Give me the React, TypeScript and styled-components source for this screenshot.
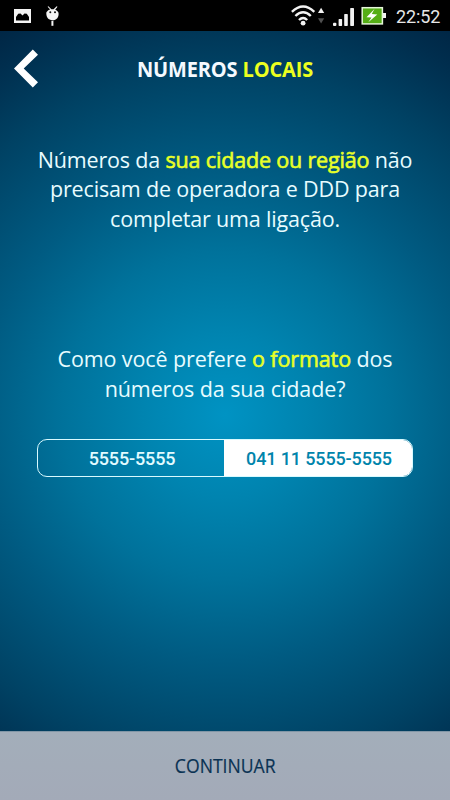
import React from 'react';
import styled, { createGlobalStyle } from 'styled-components';

const GlobalStyle = createGlobalStyle`
  * { box-sizing: border-box; }
  body { margin: 0; background: #000; }
  button { font: inherit; border: 0; padding: 0; background: none; }
`;

const Screen = styled.div`
  width: 450px;
  height: 800px;
  display: flex;
  flex-direction: column;
  overflow: hidden;
  font-family: 'Open Sans', 'Noto Sans', sans-serif;
  color: #e8fcff;
`;

const StatusBar = styled.header`
  height: 31px;
  flex: none;
  display: flex;
  justify-content: space-between;
  background: #000;
  svg { display: block; }
`;

const StatusRight = styled.div`
  display: flex;
`;

const Clock = styled.time`
  width: 60px;
  padding-left: 6px;
  font: 400 18px/33px Roboto, sans-serif;
  letter-spacing: -0.1px;
  color: #e6e6e6;
`;

const Page = styled.main`
  flex: 1;
  display: flex;
  flex-direction: column;
  background: radial-gradient(circle 455px at 225px 384px,
    #0093c3 0%, #0084b0 18%, #00729b 36%, #005b82 54%, #004264 76%, #002e4e 91%, #002442 100%);
`;

const TitleBar = styled.div`
  height: 76px;
  display: grid;
  grid-template-columns: 52px 1fr 52px;
  align-items: center;
`;

const BackButton = styled.button`
  width: 52px;
  height: 76px;
  svg { display: block; }
`;

const Title = styled.h1`
  margin: 0;
  text-align: center;
  white-space: nowrap;
  font: 700 20.5px/30px 'Open Sans', sans-serif;
  letter-spacing: -0.15px;
  transform: scaleX(0.976);
  color: #f4faff;
`;

const Accent = styled.span`
  color: #ecff1f;
`;

const Highlight = styled.span`
  color: #e8ff28;
  -webkit-text-stroke: 0.6px #e8ff28;
`;

const Paragraph = styled.p<{ $top: number; $spacing: number }>`
  margin: ${p => p.$top}px 0 0;
  text-align: center;
  white-space: nowrap;
  font-size: 21.5px;
  letter-spacing: ${p => p.$spacing}px;
  line-height: 29.4px;
`;

const Segmented = styled.div`
  display: flex;
  width: 376px;
  height: 38px;
  margin: 36px auto 0;
  border: 1.5px solid #d8faff;
  border-radius: 10px;
  overflow: hidden;
`;

const Segment = styled.button<{ $active?: boolean }>`
  width: ${p => (p.$active ? 188 : 186)}px;
  padding-left: 2px;
  flex: none;
  font: 500 18px/38px Roboto, sans-serif;
  letter-spacing: -0.14px;
  background: ${p => (p.$active ? '#fff' : 'transparent')};
  color: ${p => (p.$active ? '#0084ab' : '#e2fbff')};
`;

const ContinueButton = styled.button`
  flex: none;
  height: 69px;
  background: linear-gradient(#a3aeba, #a3aab8);
  border-top: 1px solid #8196a6;
  font: 400 20px/66px 'Open Sans', sans-serif;
  color: #0a3253;
`;

const ContinueLabel = styled.span`
  display: inline-block;
  transform: scaleX(0.88);
  -webkit-text-stroke: 0.2px #0a3253;
`;

function NotificationIcons() {
  return (
    <svg width="70" height="31" viewBox="0 0 70 31" fill="#f4f4f4">
      <path fillRule="evenodd" d="M14 9h17v14H14zM16 20.500h13v-3.500l-2.200-3.200-2.300-.2-2 1.800-2-2-2.300.3-2.200 3.300z" />
      <path d="M46.400 12.300c1.200-1.800 2.500-2.600 3.800-2.800L47.600 6.800l.8-.6 3 3h2.200l3.100-3 .8.6-2.300 2.900c1.600.7 2.700 1.700 3.300 3 .7 4.400-1.900 7.600-6 7.600s-6.800-3.600-6.100-8z" />
      <circle cx="50.300" cy="12.200" r="1" fill="#111" />
      <circle cx="55" cy="12.200" r="1" fill="#111" />
      <path d="M51.400 20.800h2v5h-2z" />
    </svg>
  );
}

function SystemIcons() {
  return (
    <svg width="100" height="31" viewBox="290 0 100 31">
      <g fill="none" stroke="#f2f2f2" strokeWidth="2.400">
        <path d="M291.900 11.800q11.200-10.600 22.400 0" />
        <path d="M295.400 16q7.700-7.400 15.400 0" />
        <path d="M299 20q4.100-4.100 8.200 0" />
      </g>
      <circle cx="303.100" cy="23.200" r="2.400" fill="#f2f2f2" />
      <path d="M318 13l3.100-5.200 3.100 5.200z" fill="#f2f2f2" />
      <path d="M318 18.200l3.100 5.300 3.100-5.300z" fill="#505050" />
      <g fill="#f2f2f2">
        <rect x="333" y="22.800" width="3.400" height="3.200" rx="1" />
        <rect x="338.600" y="19" width="3.500" height="7" rx=".7" />
        <rect x="344.200" y="14" width="3.600" height="12" rx=".7" />
        <rect x="350.200" y="8" width="3.800" height="18" rx=".7" />
        <rect x="382" y="13" width="4" height="5" />
      </g>
      <rect x="362.200" y="7.700" width="20.200" height="16.200" fill="#55ae16" stroke="#e5f6d9" strokeWidth="1.500" />
      <path d="M374.500 9l-8 8.200 5 .3-3.200 4.800 9-7.900-5.500-.3z" fill="#fff" />
    </svg>
  );
}

export default function App() {
  return (
    <Screen>
      <GlobalStyle />
      <StatusBar>
        <NotificationIcons />
        <StatusRight>
          <SystemIcons />
          <Clock>22:52</Clock>
        </StatusRight>
      </StatusBar>
      <Page>
        <TitleBar>
          <BackButton aria-label="Voltar">
            <svg width="52" height="76" viewBox="0 31 52 76">
              <path d="M32.800 49.500 38 54.700 23.700 68.400 38 82.300 32.800 87.600 14 68.400z" fill="#fff" />
            </svg>
          </BackButton>
          <Title>NÚMEROS <Accent>LOCAIS</Accent></Title>
        </TitleBar>
        <Paragraph $top={38} $spacing={-0.17}>
          Números da <Highlight>sua cidade ou região</Highlight> não<br />
          precisam de operadora e DDD para<br />
          completar uma ligação.
        </Paragraph>
        <Paragraph $top={111} $spacing={-0.1}>
          Como você prefere <Highlight>o formato</Highlight> dos<br />
          números da sua cidade?
        </Paragraph>
        <Segmented>
          <Segment>5555-5555</Segment>
          <Segment $active>041 11 5555-5555</Segment>
        </Segmented>
      </Page>
      <ContinueButton><ContinueLabel>CONTINUAR</ContinueLabel></ContinueButton>
    </Screen>
  );
}
